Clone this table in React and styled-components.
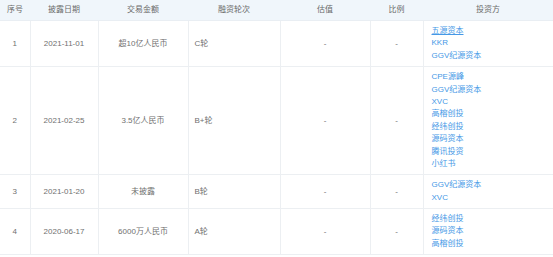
import React from "react";
import styled, { createGlobalStyle } from "styled-components";

const GlobalStyle = createGlobalStyle`
  body {
    margin: 0;
    background: #fff;
    font-family: "Liberation Sans", "Noto Sans CJK SC", sans-serif;
  }
`;

const rounds = [
  { no: 1, date: "2021-11-01", amount: "超10亿人民币", round: "C轮", investors: ["五源资本", "KKR", "GGV纪源资本"] },
  {
    no: 2,
    date: "2021-02-25",
    amount: "3.5亿人民币",
    round: "B+轮",
    investors: ["CPE源峰", "GGV纪源资本", "XVC", "高榕创投", "经纬创投", "源码资本", "腾讯投资", "小红书"],
  },
  { no: 3, date: "2021-01-20", amount: "未披露", round: "B轮", investors: ["GGV纪源资本", "XVC"] },
  { no: 4, date: "2020-06-17", amount: "6000万人民币", round: "A轮", investors: ["经纬创投", "源码资本", "高榕创投"] },
];

function App() {
  return (
    <>
      <GlobalStyle />
      <Table>
        <colgroup>
          <col style={{ width: 30 }} />
          <col style={{ width: 68 }} />
          <col style={{ width: 90 }} />
          <col style={{ width: 92 }} />
          <col style={{ width: 90 }} />
          <col style={{ width: 53 }} />
          <col style={{ width: 130 }} />
        </colgroup>
        <thead>
          <tr>
            <Th>序号</Th>
            <Th>披露日期</Th>
            <Th>交易金额</Th>
            <Th>融资轮次</Th>
            <Th>估值</Th>
            <Th>比例</Th>
            <Th>投资方</Th>
          </tr>
        </thead>
        <tbody>
          {rounds.map((r) => (
            <tr key={r.no}>
              <Td>{r.no}</Td>
              <Td>{r.date}</Td>
              <Td>{r.amount}</Td>
              <Td align="left">{r.round}</Td>
              <Td>-</Td>
              <Td>-</Td>
              <Td align="left" $pad={8}>
                {r.investors.map((name, i) => (
                  <Investor key={name} $underline={r.no === 1 && i === 0}>
                    {name}
                  </Investor>
                ))}
              </Td>
            </tr>
          ))}
        </tbody>
      </Table>
    </>
  );
}

export default App;

const Table = styled.table`
  width: 553px;
  table-layout: fixed;
  border-collapse: collapse;
  font-size: 8px;
  color: #707070;
`;

const Th = styled.th`
  background: #f0f6fb;
  font-weight: normal;
  color: #6a6a6a;
  height: 20px;
  line-height: 12px;
  padding: 0;
  text-align: center;
  border-bottom: 1px solid #e9eef3;
`;

const Td = styled.td`
  text-align: ${(p) => p.align || "center"};
  padding: 4px ${(p) => (p.$pad ? `${p.$pad}px` : p.align === "left" ? "6px" : "0")};
  line-height: 12px;
  vertical-align: middle;
  border: 1px solid #eceff2;
  border-top: none;

  &:first-child {
    border-left: none;
  }
  &:last-child {
    border-right: none;
  }
`;

const Investor = styled.a`
  display: block;
  height: 12.4px;
  line-height: 12.4px;
  overflow: visible;
  color: #4598e6;
  text-decoration: ${(p) => (p.$underline ? "underline" : "none")};
  cursor: pointer;
`;
